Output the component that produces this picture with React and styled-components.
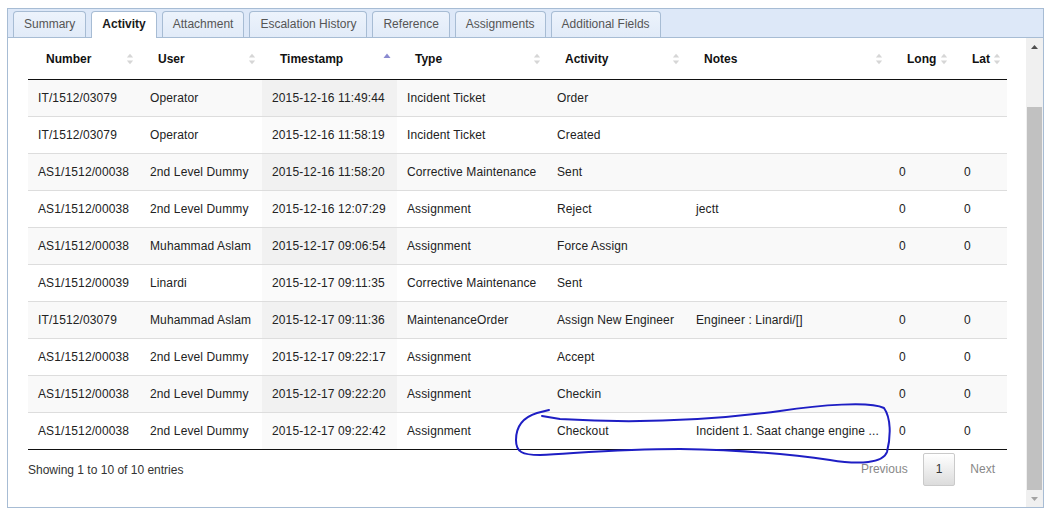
import React from 'react';
import styled, { createGlobalStyle } from 'styled-components';

const GlobalStyle = createGlobalStyle`
  html, body { margin: 0; padding: 0; background: #fff; }
  body { font-family: "Liberation Sans", Arial, sans-serif; font-size: 12px; color: #222; }
  * { box-sizing: border-box; }
`;

const Page = styled.div`
  position: relative;
  width: 1057px;
  height: 509px;
  padding: 8px 0 0 7px;
`;

const Panel = styled.div`
  width: 1037px;
  height: 500px;
  border: 1px solid #a7bcd4;
  display: flex;
  flex-direction: column;
`;

const TabBar = styled.div`
  height: 29px;
  flex: none;
  background: #dde8f8;
  border-bottom: 1px solid #a7bcd4;
  display: flex;
  align-items: flex-end;
  gap: 5px;
  padding-left: 5px;
`;

const Tab = styled.div`
  height: ${p => (p.$active ? '27px' : '26px')};
  margin-bottom: ${p => (p.$active ? '-1px' : '0')};
  padding: 0 10px;
  border: 1px solid #a7bcd4;
  border-bottom: none;
  border-radius: 4px 4px 0 0;
  background: ${p => (p.$active ? '#fff' : 'linear-gradient(#edf3fc, #e1ebf8)')};
  color: ${p => (p.$active ? '#1a1a1a' : '#555')};
  font-weight: ${p => (p.$active ? 'bold' : 'normal')};
  font-size: 12px;
  line-height: 24px;
  white-space: nowrap;
`;

const Body = styled.div`
  flex: 1;
  display: flex;
  min-height: 0;
`;

const Content = styled.div`
  flex: 1;
  padding: 3px 18px 0 20px;
`;

const Table = styled.table`
  width: 979px;
  table-layout: fixed;
  border-collapse: separate;
  border-spacing: 0;
  border-bottom: 1px solid #111;
`;

const Th = styled.th`
  padding: 9px 5px 11px 18px;
  border-bottom: 1px solid #111;
  text-align: left;
  font-weight: bold;
  font-size: 12px;
  line-height: 18px;
  color: #111;
`;

const HeadInner = styled.div`
  display: flex;
  align-items: center;
  justify-content: space-between;
`;

const Row = styled.tr`
  background: ${p => (p.$odd ? '#f9f9f9' : '#fff')};
`;

const Td = styled.td`
  padding: 8px 10px;
  line-height: 20px;
  font-size: 12px;
  letter-spacing: 0.12px;
  color: #222;
  white-space: nowrap;
  border-top: ${p => (p.$first ? 'none' : '1px solid #ddd')};
  background: ${p => (p.$sorted ? (p.$odd ? '#f1f1f1' : '#fafafa') : 'transparent')};
`;

const Footer = styled.div`
  display: flex;
  justify-content: space-between;
  align-items: flex-start;
`;

const Info = styled.div`
  padding-top: 11px;
  line-height: 18px;
  color: #333;
  font-size: 12px;
`;

const Pager = styled.div`
  display: flex;
  gap: 2px;
  padding-top: 3px;
`;

const PageBtn = styled.div`
  padding: 6px 12px;
  line-height: 19px;
  font-size: 12px;
  border: 1px solid ${p => (p.$current ? '#cacaca' : 'transparent')};
  border-radius: 2px;
  background: ${p => (p.$current ? 'linear-gradient(#fff, #dcdcdc)' : 'transparent')};
  color: ${p => (p.$current ? '#333' : '#888')};
`;

const ScrollBar = styled.div`
  width: 17px;
  flex: none;
  background: #f0f0f0;
  display: flex;
  flex-direction: column;
`;

const ScrollBtn = styled.div`
  height: 17px;
  flex: none;
  display: flex;
  align-items: center;
  justify-content: center;
`;

const Track = styled.div`
  flex: 1;
  display: flex;
  flex-direction: column;
  padding-top: 52px;
`;

const Thumb = styled.div`
  flex: 1;
  margin: 0 1px;
  background: #c1c1c1;
`;

const Annotation = styled.svg`
  position: absolute;
  left: 0;
  top: 0;
  pointer-events: none;
`;

const SortIcon = ({ dir }) => (
  <svg width="10" height="14" viewBox="0 0 10 14">
    {dir === 'asc' ? (
      <polygon points="1.5,6 5,1.5 8.5,6" fill="#8a8ad0" />
    ) : (
      <>
        <polygon points="1.8,5.5 5,1.8 8.2,5.5" fill="#d6d6d6" />
        <polygon points="1.8,8.5 5,12.2 8.2,8.5" fill="#d6d6d6" />
      </>
    )}
  </svg>
);

const Arrow = ({ up, color }) => (
  <svg width="7" height="4" viewBox="0 0 7 4">
    <polygon points={up ? '0,4 3.5,0 7,4' : '0,0 3.5,4 7,0'} fill={color} />
  </svg>
);

const tabs = ['Summary', 'Activity', 'Attachment', 'Escalation History', 'Reference', 'Assignments', 'Additional Fields'];

const columns = [
  { label: 'Number', width: 112 },
  { label: 'User', width: 122 },
  { label: 'Timestamp', width: 135, sort: 'asc' },
  { label: 'Type', width: 150 },
  { label: 'Activity', width: 139 },
  { label: 'Notes', width: 203 },
  { label: 'Long', width: 65 },
  { label: 'Lat', width: 53 },
];

const rows = [
  ['IT/1512/03079', 'Operator', '2015-12-16 11:49:44', 'Incident Ticket', 'Order', '', '', ''],
  ['IT/1512/03079', 'Operator', '2015-12-16 11:58:19', 'Incident Ticket', 'Created', '', '', ''],
  ['AS1/1512/00038', '2nd Level Dummy', '2015-12-16 11:58:20', 'Corrective Maintenance', 'Sent', '', '0', '0'],
  ['AS1/1512/00038', '2nd Level Dummy', '2015-12-16 12:07:29', 'Assignment', 'Reject', 'jectt', '0', '0'],
  ['AS1/1512/00038', 'Muhammad Aslam', '2015-12-17 09:06:54', 'Assignment', 'Force Assign', '', '0', '0'],
  ['AS1/1512/00039', 'Linardi', '2015-12-17 09:11:35', 'Corrective Maintenance', 'Sent', '', '', ''],
  ['IT/1512/03079', 'Muhammad Aslam', '2015-12-17 09:11:36', 'MaintenanceOrder', 'Assign New Engineer', 'Engineer : Linardi/[]', '0', '0'],
  ['AS1/1512/00038', '2nd Level Dummy', '2015-12-17 09:22:17', 'Assignment', 'Accept', '', '0', '0'],
  ['AS1/1512/00038', '2nd Level Dummy', '2015-12-17 09:22:20', 'Assignment', 'Checkin', '', '0', '0'],
  ['AS1/1512/00038', '2nd Level Dummy', '2015-12-17 09:22:42', 'Assignment', 'Checkout', 'Incident 1. Saat change engine ...', '0', '0'],
];

export default function App() {
  return (
    <Page>
      <GlobalStyle />
      <Panel>
        <TabBar>
          {tabs.map(t => (
            <Tab key={t} $active={t === 'Activity'}>{t}</Tab>
          ))}
        </TabBar>
        <Body>
          <Content>
            <Table>
              <colgroup>
                {columns.map(c => (
                  <col key={c.label} style={{ width: c.width }} />
                ))}
              </colgroup>
              <thead>
                <tr>
                  {columns.map(c => (
                    <Th key={c.label}>
                      <HeadInner>
                        <span>{c.label}</span>
                        <SortIcon dir={c.sort} />
                      </HeadInner>
                    </Th>
                  ))}
                </tr>
              </thead>
              <tbody>
                {rows.map((r, i) => {
                  const odd = i % 2 === 0;
                  return (
                    <Row key={i} $odd={odd}>
                      {r.map((v, j) => (
                        <Td key={j} $first={i === 0} $odd={odd} $sorted={j === 2}>{v}</Td>
                      ))}
                    </Row>
                  );
                })}
              </tbody>
            </Table>
            <Footer>
              <Info>Showing 1 to 10 of 10 entries</Info>
              <Pager>
                <PageBtn>Previous</PageBtn>
                <PageBtn $current>1</PageBtn>
                <PageBtn>Next</PageBtn>
              </Pager>
            </Footer>
          </Content>
          <ScrollBar>
            <ScrollBtn><Arrow up color="#505050" /></ScrollBtn>
            <Track><Thumb /></Track>
            <ScrollBtn><Arrow color="#a3a3a3" /></ScrollBtn>
          </ScrollBar>
        </Body>
      </Panel>
      <Annotation width="1057" height="509" viewBox="0 0 1057 509">
        <path
          d="M 549 410 L 537 413 C 524 417, 516 426, 516 440 C 516 452, 522 455, 540 455 C 580 453, 620 449, 680 449 C 740 450, 790 454, 830 460 C 860 465, 883 463, 887 452 C 891 436, 891 418, 884 408 C 870 401, 820 405, 780 411 C 720 419, 640 424, 560 419 L 542 416"
          fill="none"
          stroke="#1e1ec4"
          strokeWidth="2"
          strokeLinecap="round"
          strokeLinejoin="round"
        />
      </Annotation>
    </Page>
  );
}
